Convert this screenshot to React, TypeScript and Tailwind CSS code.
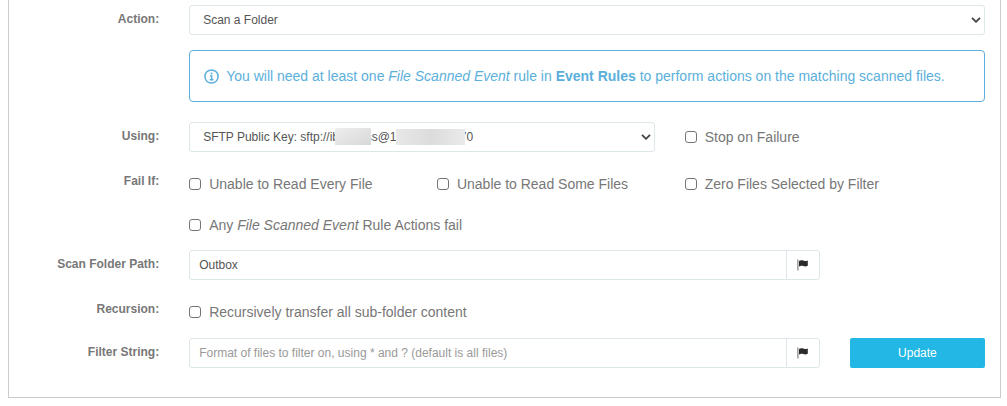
import { useState, type ReactNode } from 'react';

interface CheckProps {
  children: ReactNode;
  className?: string;
}

const Check = ({ children, className = '' }: CheckProps) => {
  const [checked, setChecked] = useState(false);

  return (
    <label className={`flex items-center gap-2 text-sm text-[#777777] ${className}`}>
      <input
        type="checkbox"
        checked={checked}
        onChange={e => setChecked(e.target.checked)}
        className="size-3 shrink-0 appearance-none rounded-[3px] border border-[#767676] bg-white checked:bg-[#23b7e5]"
      />
      <span>{children}</span>
    </label>
  );
};

const Chevron = () => (
  <svg viewBox="0 0 10 6" className="pointer-events-none absolute right-1 top-3 h-1.5 w-2.5" aria-hidden="true">
    <path d="M1 0.8 L5 4.8 L9 0.8" fill="none" stroke="#444444" strokeWidth="1.8" />
  </svg>
);

const InfoIcon = () => (
  <svg viewBox="0 0 15 15" className="size-[15px] shrink-0" fill="none" stroke="currentColor" aria-hidden="true">
    <circle cx="7.5" cy="7.5" r="6.6" strokeWidth="1.5" />
    <circle cx="7.5" cy="4.4" r="1" fill="currentColor" stroke="none" />
    <path d="M5.8 6.9 H7.7 V10.6 M5.6 10.7 H9.5" strokeWidth="1.4" />
  </svg>
);

const FlagIcon = () => (
  <svg viewBox="0 0 11 12" className="h-3 w-[11px]" aria-hidden="true">
    <path d="M0.9 0.5 V11.5" stroke="#777777" strokeWidth="1.1" />
    <path d="M2 2 C3.4 1 4.8 1 6.2 1.6 C7.6 2.2 9 2 10.8 1.4 V6.8 C9 7.6 7.6 7.7 6.2 7.1 C4.8 6.6 3.4 6.7 2 7.6 Z" fill="#2b2b2b" />
  </svg>
);

const labelClass = 'col-span-2 text-right text-xs font-bold text-[#777777] leading-7';
const selectClass =
  'block h-[30px] w-full appearance-none rounded-[3px] border border-[#dde6e9] bg-white px-[13px] text-xs text-[#555555]';

interface PathFieldProps {
  id: string;
  value: string;
  placeholder?: string;
  onChange: (value: string) => void;
}

const PathField = ({ id, value, placeholder, onChange }: PathFieldProps) => (
  <div className="col-span-8 mt-[15px] flex h-[30px] rounded-[3px] border border-[#dde6e9]">
    <input
      id={id}
      type="text"
      value={value}
      placeholder={placeholder}
      onChange={e => onChange(e.target.value)}
      className="min-w-0 flex-1 px-[9px] text-xs text-[#555555] placeholder:text-[#999999]"
    />
    <button type="button" aria-label="Insert variable" className="flex w-[33px] items-center justify-center border-l border-[#dde6e9]">
      <FlagIcon />
    </button>
  </div>
);

export default function App() {
  const [folder, setFolder] = useState('Outbox');
  const [filter, setFilter] = useState('');

  return (
    <div className="bg-white pb-2 pl-2 pr-1.5 font-['Liberation_Sans',Arial,sans-serif]">
      <form className="border-x border-b border-[#cccccc] px-[15px] pb-[29px] pt-[5px]" onSubmit={e => e.preventDefault()}>
        <div className="grid grid-cols-12 gap-x-[30px]">
          <label htmlFor="action" className={labelClass}>Action:</label>
          <div className="relative col-span-10">
            <select id="action" className={selectClass}>
              <option>Scan a Folder</option>
            </select>
            <Chevron />
          </div>

          <div className="col-span-10 col-start-3 mt-[15px] flex min-h-[52px] items-center gap-[7px] rounded border border-[#5bafdb] px-3.5 text-sm text-[#5bafdb]">
            <InfoIcon />
            <p>
              You will need at least one <em>File Scanned Event</em> rule in <b>Event Rules</b> to perform actions on the matching scanned files.
            </p>
          </div>

          <label htmlFor="using" className={`${labelClass} mt-5`}>Using:</label>
          <div className="relative col-span-6 mt-5">
            <select id="using" className={selectClass}>
              <option>{`SFTP Public Key: sftp://ib${'\u00a0'.repeat(8)}ss@1${'\u00a0'.repeat(19)}70`}</option>
            </select>
            <Chevron />
            {/* masked user name and host */}
            <span className="absolute left-[146px] top-1.5 h-[17px] w-9 bg-linear-to-br from-[#eeeeee] to-[#d8d8d8]" />
            <span className="absolute left-[207px] top-[7px] h-4 w-[69px] bg-linear-to-r from-[#e8e8e8] via-[#dcdcdc] to-[#eaeaea]" />
          </div>
          <Check className="col-span-4 mt-5">Stop on Failure</Check>

          <span className={`${labelClass} mt-[15px]`}>Fail If:</span>
          <Check className="col-span-3 mt-5">Unable to Read Every File</Check>
          <Check className="col-span-3 mt-5">Unable to Read Some Files</Check>
          <Check className="col-span-4 mt-5">Zero Files Selected by Filter</Check>

          <Check className="col-span-10 col-start-3 mt-5">
            Any <em>File Scanned Event</em> Rule Actions fail
          </Check>

          <label htmlFor="folder" className={`${labelClass} mt-[15px]`}>Scan Folder Path:</label>
          <PathField id="folder" value={folder} onChange={setFolder} />

          <span className={`${labelClass} col-start-1 mt-[15px]`}>Recursion:</span>
          <Check className="col-span-10 mt-5">Recursively transfer all sub-folder content</Check>

          <label htmlFor="filter" className={`${labelClass} mt-[15px]`}>Filter String:</label>
          <PathField
            id="filter"
            value={filter}
            placeholder="Format of files to filter on, using * and ? (default is all files)"
            onChange={setFilter}
          />
          <button type="submit" className="col-span-2 mt-[15px] h-[30px] rounded-[2px] bg-[#23b7e5] text-xs text-white">
            Update
          </button>
        </div>
      </form>
    </div>
  );
}
